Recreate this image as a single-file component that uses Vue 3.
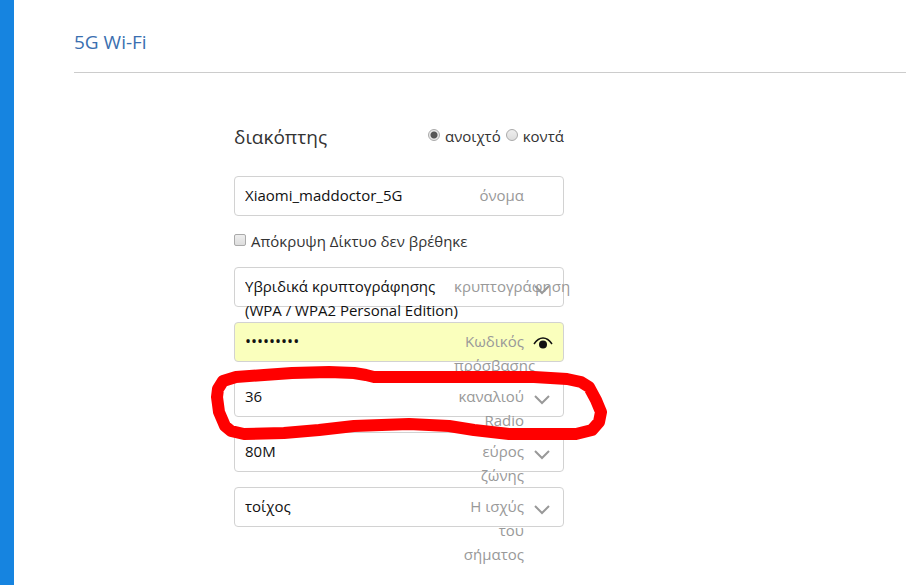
<template>
  <main class="page">
    <h2 class="title">5G Wi-Fi</h2>

    <form class="wifi-form" @submit.prevent>
      <div class="switch-row" role="radiogroup" aria-labelledby="switch-title">
        <span id="switch-title" class="switch-title">διακόπτης</span>
        <div class="switch-options">
          <label><input v-model="form.enabled" type="radio" name="enabled" value="on" />ανοιχτό</label>
          <label><input v-model="form.enabled" type="radio" name="enabled" value="off" />κοντά</label>
        </div>
      </div>

      <div class="field">
        <input id="ssid" v-model="form.ssid" type="text" class="control" />
        <label for="ssid" class="field-label">όνομα</label>
      </div>

      <label class="hide-row">
        <input v-model="form.hidden" type="checkbox" />Απόκρυψη Δίκτυο δεν βρέθηκε
      </label>

      <div class="field">
        <select id="encryption" v-model="form.encryption" class="control" aria-describedby="encryption-note">
          <option value="mixed">Υβριδικά κρυπτογράφησης</option>
        </select>
        <span id="encryption-note" class="field-note">(WPA / WPA2 Personal Edition)</span>
        <label for="encryption" class="field-label">κρυπτογράφηση</label>
        <svg class="chevron" viewBox="0 0 16 10"><path d="M1 1 8 8 15 1" /></svg>
      </div>

      <div class="field">
        <input id="password" v-model="form.password" :type="showPassword ? 'text' : 'password'" class="control filled" />
        <label for="password" class="field-label">Κωδικός πρόσβασης</label>
        <button type="button" class="eye-btn" aria-label="Κωδικός" @click="showPassword = !showPassword">
          <svg viewBox="0 0 20 12">
            <path d="M1 7C4 2.500 7 1 10 1s6 1.500 9 6" fill="none" stroke="#111" stroke-width="1.500" />
            <circle cx="10" cy="7.500" r="4" fill="#111" />
          </svg>
        </button>
      </div>

      <div v-for="item in selects" :key="item.id" class="field">
        <select :id="item.id" v-model="form[item.id]" class="control">
          <option v-for="opt in item.options" :key="opt">{{ opt }}</option>
        </select>
        <label :for="item.id" class="field-label">{{ item.label }}</label>
        <svg class="chevron" viewBox="0 0 16 10"><path d="M1 1 8 8 15 1" /></svg>
        <!-- 手绘红圈 -->
        <svg v-if="item.marked" class="marker" viewBox="0 0 410 90">
          <path d="M13 35L14 27L19 19L32 15L60 13L88 11L125 10L150 11L162 13L170 15L330 15L363 17L377 20L385 25L392 38L397 50L395 60L388 68L372 72L305 72L270 68L245 64L205 62L150 64L115 68L80 71L40 72L27 69L21 64L15 50Z" />
        </svg>
      </div>
    </form>
  </main>
</template>

<script setup>
import { ref, reactive } from 'vue'

const showPassword = ref(false)

const form = reactive({
  enabled: 'on',
  ssid: 'Xiaomi_maddoctor_5G',
  hidden: false,
  encryption: 'mixed',
  password: '123456789',
  channel: '36',
  bandwidth: '80M',
  power: 'τοίχος'
})

const selects = [
  { id: 'channel', label: 'καναλιού Radio', options: ['36'], marked: true },
  { id: 'bandwidth', label: 'εύρος ζώνης', options: ['80M'] },
  { id: 'power', label: 'Η ισχύς του σήματος', options: ['τοίχος'] }
]
</script>

<style>
body { background: #fff; }
</style>

<style scoped>
.page {
  box-sizing: border-box;
  min-height: 100vh;
  padding: 24px 0 0 60px;
  border-left: 14px solid #1684e0;
  overflow: hidden;
  font-family: "Open Sans", "Noto Sans", sans-serif;
  font-size: 15px;
  line-height: 24px;
  color: #333;
}
.title {
  margin: 0;
  padding-bottom: 12px;
  border-bottom: 1px solid #ccc;
  font-size: 19px;
  font-weight: 400;
  line-height: 36px;
  color: #3a6fb0;
}
.wifi-form {
  width: 330px;
  margin: 52px 0 0 160px;
}

/* 开关 */
.switch-row {
  display: flex;
  justify-content: space-between;
  align-items: center;
  height: 24px;
  margin-bottom: 27px;
}
.switch-title { font-size: 19px; }
.switch-options { display: flex; gap: 5px; padding-bottom: 2px; }
.switch-options label, .hide-row { display: flex; align-items: center; gap: 5px; }
.switch-options input, .hide-row input {
  appearance: none;
  box-sizing: border-box;
  flex: none;
  width: 12px;
  height: 12px;
  margin: 0 0 2px;
  border: 1px solid #aaa;
  background: linear-gradient(#eee, #ddd);
}
.switch-options input { border-radius: 50%; }
.switch-options input:checked { background: radial-gradient(circle, #555 0 3px, #e8e8e8 4px); }
.hide-row input { border-radius: 2px; }
.hide-row input:checked { background: #555; }
.hide-row { margin: -2px 0 14px; }

/* 输入框 */
.field {
  position: relative;
  height: 40px;
  margin-bottom: 15px;
}
.control {
  appearance: none;
  box-sizing: border-box;
  display: block;
  width: 100%;
  height: 40px;
  padding: 0 120px 2px 10px;
  border: 1px solid #d2d2d2;
  border-radius: 4px;
  outline: none;
  background: #fff;
  color: #111;
  font: inherit;
}
.control.filled { background: #faffbd; }
.control[type="password"] { font-size: 16px; }
.field-label {
  position: absolute;
  top: 7px;
  right: 40px;
  width: 70px;
  text-align: right;
  color: #999;
}
.field-note {
  position: absolute;
  top: 31px;
  left: 11px;
  white-space: nowrap;
  color: #111;
}
.chevron {
  position: absolute;
  top: 18px;
  right: 14px;
  width: 16px;
  height: 10px;
  fill: none;
  stroke: #999;
  stroke-width: 2;
  pointer-events: none;
}
.eye-btn {
  position: absolute;
  top: 15px;
  right: 11px;
  padding: 0;
  border: 0;
  background: none;
  line-height: 0;
  cursor: pointer;
}
.eye-btn svg { width: 20px; height: 12px; }
.marker {
  position: absolute;
  z-index: 2;
  top: -15px;
  left: -30px;
  width: 410px;
  height: 90px;
  fill: none;
  stroke: #f00;
  stroke-width: 12;
  stroke-linejoin: round;
  pointer-events: none;
}
</style>
